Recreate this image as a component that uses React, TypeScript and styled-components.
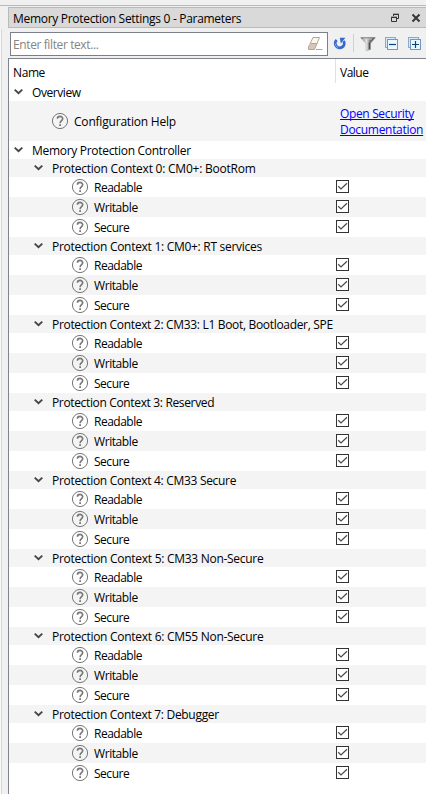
import React from 'react';
import styled, { createGlobalStyle } from 'styled-components';

const GlobalStyle = createGlobalStyle`
  * { box-sizing: border-box; }
  html, body { margin: 0; padding: 0; overflow: hidden; }
`;

const Window = styled.div`
  width: 426px;
  height: 794px;
  display: flex;
  flex-direction: column;
  overflow: hidden;
  background: #f0f0f0;
  color: #000;
  font: 12px/16px 'Open Sans', 'Noto Sans', sans-serif;
  white-space: nowrap;
`;

const TopEdge = styled.div`
  height: 6px;
  flex: none;
  border-bottom: 1px solid #b9b9b9;
`;

const Body = styled.div`
  flex: 1;
  display: flex;
  min-height: 0;
  padding-top: 1px;
`;

const Gutter = styled.div`
  width: 2px;
  margin: 22px 6px 0 0;
  flex: none;
  background: #f8f8f8;
  border-right: 1px solid #d8d8d8;
`;

const Dock = styled.section`
  flex: 1;
  min-width: 0;
  display: flex;
  flex-direction: column;
`;

const TitleBar = styled.header`
  height: 21px;
  flex: none;
  display: flex;
  align-items: center;
  padding: 1px 5px 0 4px;
  background: #d9d9d9;
  border: 1px solid #b9b9b9;
  border-right: 0;
`;

const Title = styled.div`
  flex: 1;
  padding-top: 2px;
`;

const TitleButton = styled.button`
  width: 10px;
  height: 10px;
  margin: 0 0 1px 11px;
  padding: 0;
  border: 0;
  background: none;
  display: flex;
`;

const Toolbar = styled.div`
  height: 30px;
  flex: none;
  display: flex;
  align-items: center;
  padding: 0 4px 0 2px;
`;

const FilterBox = styled.div`
  width: 318px;
  height: 24px;
  margin-top: 1px;
  padding: 0 4px 0 2px;
  display: flex;
  align-items: center;
  background: #fff;
  border: 1px solid #7a7f89;
`;

const Placeholder = styled.div`
  flex: 1;
  padding-top: 2px;
  color: #848484;
`;

const ToolButton = styled.button<{ $gap: number }>`
  height: 16px;
  margin: 1px 0 0 ${(p) => p.$gap}px;
  padding: 0;
  border: 0;
  background: none;
  display: flex;
`;

const Separator = styled.div`
  width: 1px;
  height: 18px;
  margin: 0 0 0 6px;
  background: #d0d0d0;
`;

const Tree = styled.div`
  flex: 1;
  min-height: 0;
  background: #fff;
  border-top: 1px solid #7f838d;
  border-left: 1px solid #7f838d;
`;

const Header = styled.div`
  height: 24px;
  display: grid;
  grid-template-columns: 327px 1fr;
  align-items: center;
`;

const HeaderCell = styled.div<{ $ruled?: boolean }>`
  height: 24px;
  line-height: 28px;
  padding-left: 4px;
  border-right: ${(p) => (p.$ruled ? '1px solid #e0e0e0' : '0')};
`;

const Row = styled.div<{ $h: number; $shade?: boolean }>`
  height: ${(p) => p.$h}px;
  display: grid;
  grid-template-columns: 327px 1fr;
  align-items: center;
  background: ${(p) => (p.$shade ? '#f4f4f4' : '#fff')};
`;

const NameCell = styled.div<{ $indent: number }>`
  display: flex;
  align-items: center;
  padding-left: ${(p) => p.$indent}px;
`;

const Label = styled.span<{ $spacing: number }>`
  padding-top: 2px;
  letter-spacing: ${(p) => p.$spacing}px;
`;

const ValueCell = styled.div`
  display: flex;
`;

const Link = styled.a`
  padding: 2px 0 0 4px;
  color: #00f;
  text-decoration: underline;
  text-decoration-skip-ink: none;
  text-decoration-thickness: 1px;
  text-underline-offset: 1px;
  cursor: pointer;
`;

const Arrow = styled.svg`
  width: 10px;
  height: 8px;
  margin-right: 8px;
  flex: none;
`;

const Help = styled.svg`
  width: 18px;
  height: 18px;
  margin-right: 5px;
  flex: none;
`;

const Box = styled.svg`
  width: 13px;
  height: 13px;
  margin-bottom: 1px;
`;

const ArrowIcon = () => (
  <Arrow viewBox="0 0 10 8">
    <path d="M.7 1.6 4.5 5.2 8.3 1.6" fill="none" stroke="#454545" strokeWidth="1.9" />
  </Arrow>
);

const HelpIcon = () => (
  <Help viewBox="0 0 18 18" fill="none" stroke="#777">
    <circle cx="9" cy="9" r="7.6" strokeWidth="1" />
    <path d="M6.4 6.8C6.4 3.6 11.7 3.6 11.7 6.8 11.7 8.7 9.1 8.7 9.1 11.2" strokeWidth="1.6" />
    <path d="M9.1 12.3v1.7" strokeWidth="1.8" />
  </Help>
);

const CheckIcon = () => (
  <Box viewBox="0 0 13 13">
    <rect x=".5" y=".5" width="12" height="12" fill="#fff" stroke="#333" />
    <path d="M2.2 6.3 5 9 11 3.3" fill="none" stroke="#484848" strokeWidth="1.2" />
  </Box>
);

const EraserIcon = () => (
  <svg width="16" height="16" viewBox="0 0 16 16">
    <path d="M6 1.5h6.5L7.5 13.5H1.5V11Z" fill="#fbf7f0" />
    <path d="M3.8 7.5h6L7.5 13.5H1.5V11Z" fill="#d5c8b8" />
    <path d="M6 1.5h6.5L7.5 13.5H1.5V11ZM4 7.5h6M9 13.5h6.5" fill="none" stroke="#b3a595" />
  </svg>
);

const RefreshIcon = () => (
  <svg width="14" height="16" viewBox="0 0 14 16">
    <path d="M3.7 4A4.5 4.5 0 1 0 10.6 5" fill="none" stroke="#3569cc" strokeWidth="2.9" />
    <path d="M6.8 1.8h5.6L7.8 7.6Z" fill="#3569cc" />
    <path d="M2.3 7.5a4.6 4.6 0 0 0 3 4.4" fill="none" stroke="#79a3ee" strokeWidth="1" />
  </svg>
);

const FunnelIcon = () => (
  <svg width="16" height="16" viewBox="0 0 16 16">
    <defs>
      <linearGradient id="metal">
        <stop offset="0" stopColor="#666" />
        <stop offset=".4" stopColor="#e5e5e5" />
        <stop offset=".65" stopColor="#777" />
        <stop offset="1" stopColor="#444" />
      </linearGradient>
    </defs>
    <path d="M.5 1.5h15l-5 6v6L6 15V7.5Z" fill="url(#metal)" stroke="#aaa" strokeWidth=".5" />
    <path d="M1 2h14" stroke="#777" />
    <path d="M3 3h9" stroke="#ccc" />
    <path d="M9.5 6.5v6.8" stroke="#505050" strokeWidth="1.5" />
  </svg>
);

const StackIcon = ({ plus = false }: { plus?: boolean }) => (
  <svg width="14" height="16" viewBox="0 0 14 16">
    <rect x=".5" y="1.5" width="10" height="10" fill="#d6eafa" stroke="#8ba9cc" />
    <rect x="2.5" y="3.5" width="10" height="10" fill="#eaf7ff" stroke="#7695bd" />
    <path d={plus ? 'M4 8.5h7M7.5 5v7' : 'M4 8.5h7'} stroke="#0a4384" strokeWidth="1.2" />
  </svg>
);

const FloatIcon = () => (
  <svg width="10" height="10" viewBox="0 0 10 10" fill="none" stroke="#333">
    <path d="M3.5 3V1.5h5v4H7M3 1.2h6" />
    <path d="M1.5 4.5h5v4h-5zM1 4.2h6" />
  </svg>
);

const CloseIcon = () => (
  <svg width="10" height="10" viewBox="0 0 10 10">
    <path d="m1.5 1.5 7 7m0-7-7 7" stroke="#333" strokeWidth="1.9" />
  </svg>
);

const contexts: { title: string; spacing: number }[] = [
  { title: '0: CM0+: BootRom', spacing: -0.23 },
  { title: '1: CM0+: RT services', spacing: -0.29 },
  { title: '2: CM33: L1 Boot, Bootloader, SPE', spacing: -0.32 },
  { title: '3: Reserved', spacing: -0.35 },
  { title: '4: CM33 Secure', spacing: -0.31 },
  { title: '5: CM33 Non-Secure', spacing: -0.28 },
  { title: '6: CM55 Non-Secure', spacing: -0.28 },
  { title: '7: Debugger', spacing: -0.3 },
];

const permissions = [
  { name: 'Readable', spacing: -0.5 },
  { name: 'Writable', spacing: -0.42 },
  { name: 'Secure', spacing: -0.48 },
];

export default function App() {
  return (
    <Window>
      <GlobalStyle />
      <TopEdge />
      <Body>
        <Gutter />
        <Dock>
          <TitleBar>
            <Title><Label $spacing={-0.3}>Memory Protection Settings 0 - Parameters</Label></Title>
            <TitleButton aria-label="Float"><FloatIcon /></TitleButton>
            <TitleButton aria-label="Close"><CloseIcon /></TitleButton>
          </TitleBar>
          <Toolbar>
            <FilterBox>
              <Placeholder><Label $spacing={-0.39}>Enter filter text...</Label></Placeholder>
              <EraserIcon />
            </FilterBox>
            <ToolButton $gap={5} aria-label="Reset"><RefreshIcon /></ToolButton>
            <Separator />
            <ToolButton $gap={6} aria-label="Filter"><FunnelIcon /></ToolButton>
            <ToolButton $gap={9} aria-label="Collapse all"><StackIcon /></ToolButton>
            <ToolButton $gap={9} aria-label="Expand all"><StackIcon plus /></ToolButton>
          </Toolbar>
          <Tree>
            <Header>
              <HeaderCell $ruled><Label $spacing={-0.4}>Name</Label></HeaderCell>
              <HeaderCell><Label $spacing={-0.5}>Value</Label></HeaderCell>
            </Header>
            <Row $h={18}>
              <NameCell $indent={5}><ArrowIcon /><Label $spacing={-0.42}>Overview</Label></NameCell>
            </Row>
            <Row $h={40} $shade>
              <NameCell $indent={42}><HelpIcon /><Label $spacing={-0.2}>Configuration Help</Label></NameCell>
              <ValueCell>
                <Link>
                  <Label $spacing={-0.35}>Open Security</Label><br />
                  <Label $spacing={-0.3}>Documentation</Label>
                </Link>
              </ValueCell>
            </Row>
            <Row $h={18}>
              <NameCell $indent={5}><ArrowIcon /><Label $spacing={-0.3}>Memory Protection Controller</Label></NameCell>
            </Row>
            {contexts.map((c) => (
              <React.Fragment key={c.title}>
                <Row $h={18} $shade>
                  <NameCell $indent={25}>
                    <ArrowIcon />
                    <Label $spacing={c.spacing}>Protection Context {c.title}</Label>
                  </NameCell>
                </Row>
                {permissions.map((p, i) => (
                  <Row key={p.name} $h={20} $shade={i === 1}>
                    <NameCell $indent={62}><HelpIcon /><Label $spacing={p.spacing}>{p.name}</Label></NameCell>
                    <ValueCell><CheckIcon /></ValueCell>
                  </Row>
                ))}
              </React.Fragment>
            ))}
          </Tree>
        </Dock>
      </Body>
    </Window>
  );
}
